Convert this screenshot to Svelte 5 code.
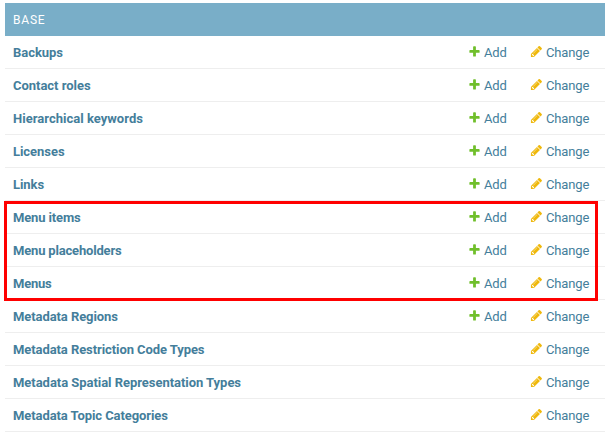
<script>
  const models = [
    { name: 'Backups', add: true, tracking: -0.04 },
    { name: 'Contact roles', add: true, tracking: -0.03 },
    { name: 'Hierarchical keywords', add: true, tracking: 0.02 },
    { name: 'Licenses', add: true, tracking: -0.05 },
    { name: 'Links', add: true, tracking: -0.08 },
    { name: 'Menu items', add: true, tracking: -0.14 },
    { name: 'Menu placeholders', add: true, tracking: -0.18 },
    { name: 'Menus', add: true, tracking: -0.22 },
    { name: 'Metadata Regions', add: true, tracking: -0.08 },
    { name: 'Metadata Restriction Code Types', add: false, tracking: -0.08 },
    { name: 'Metadata Spatial Representation Types', add: false, tracking: -0.04 },
    { name: 'Metadata Topic Categories', add: false, tracking: -0.08 }
  ];
</script>

<main>
  <section class="module">
    <h2>BASE</h2>
    {#each models as model}
      <div class="row">
        <span class="name" style="letter-spacing: {model.tracking}px">{model.name}</span>
        {#if model.add}
          <span class="action add">
            <svg viewBox="0 0 1792 1792"><path fill="#70bf2b" d="M1600 796v192q0 40-28 68t-68 28h-416v416q0 40-28 68t-68 28H800q-40 0-68-28t-28-68v-416H288q-40 0-68-28t-28-68V796q0-40 28-68t68-28h416V284q0-40 28-68t68-28h192q40 0 68 28t28 68v416h416q40 0 68 28t28 68z" /></svg>
            Add
          </span>
        {/if}
        <span class="action change">
          <svg viewBox="0 0 1792 1792"><path fill="#efb80b" d="M491 1536l91-91-235-235-91 91v107h128v128h107zm523-928q0-22-22-22-10 0-17 7l-542 542q-7 7-7 17 0 22 22 22 10 0 17-7l542-542q7-7 7-17zm-54-192l416 416-832 832H128v-416zm683 96q0 53-37 90l-166 166-416-416 166-165q36-38 90-38 53 0 91 38l235 234q37 39 37 91z" /></svg>
          Change
        </span>
      </div>
    {/each}
  </section>
  <div class="highlight"></div>
</main>

<style>
  :global(body) {
    background: #fff;
  }
  main {
    position: relative;
    box-sizing: border-box;
    width: 611px;
    height: 433px;
    padding: 3px 6px 0 5px;
    overflow: hidden;
    font-family: Roboto, 'Liberation Sans', sans-serif;
    font-size: 13px;
    line-height: 16px;
    color: #447e9b;
  }
  h2 {
    box-sizing: border-box;
    height: 33px;
    margin: 0;
    padding: 9px 8px 8px;
    background: #79aec8;
    color: #fff;
    font-size: 12px;
    font-weight: 400;
    letter-spacing: 0.8px;
  }
  .row {
    box-sizing: border-box;
    display: flex;
    height: 33px;
    padding: 9px 0 7px 8px;
    border-bottom: 1px solid #eee;
    white-space: nowrap;
  }
  .name {
    flex: 1;
    font-weight: 700;
  }
  .action {
    display: flex;
    gap: 3px;
    letter-spacing: -0.15px;
  }
  .add {
    width: 62px;
  }
  .change {
    width: 75px;
  }
  svg {
    flex: none;
    width: 13px;
    height: 13px;
  }
  .highlight {
    position: absolute;
    box-sizing: border-box;
    left: 4px;
    top: 201px;
    width: 594px;
    height: 100px;
    border: 3px solid #f00;
  }
</style>
